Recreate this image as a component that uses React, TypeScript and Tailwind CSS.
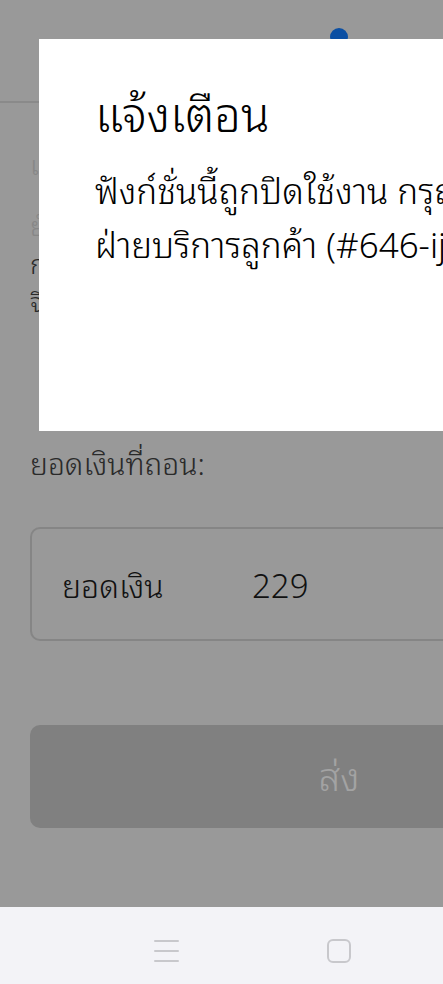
import React from 'react';

const font = {
  fontFamily: '"Noto Sans Thai Looped", "Noto Sans", "Noto Sans Thai", "DejaVu Sans", sans-serif',
};

const NavBar: React.FC = () => (
  <div className="h-[77px] bg-[#f3f3f7] flex items-center justify-around px-[80px] pt-[10px]">
    <div className="flex flex-col gap-[8px] w-[25px]">
      <span className="block h-[2px] bg-[#c8c8cc] rounded" />
      <span className="block h-[2px] bg-[#c8c8cc] rounded" />
      <span className="block h-[2px] bg-[#c8c8cc] rounded" />
    </div>
    <div className="w-[24px] h-[24px] rounded-[6px] border-2 border-[#c8c8cc]" />
    <svg width="24" height="24" viewBox="0 0 24 24" fill="none" stroke="#c8c8cc" strokeWidth="2">
      <path d="M15 5l-7 7 7 7" strokeLinecap="round" strokeLinejoin="round" />
    </svg>
  </div>
);

const App: React.FC = () => {
  return (
    <div className="relative w-[443px] h-[984px] overflow-hidden bg-[#999999]" style={font}>
      <div className="w-[678px] h-full flex flex-col">
        {/* header */}
        <div className="h-[103px] border-b-2 border-[#8a8a8a] flex justify-center pt-[28px] shrink-0">
          <span className="block w-[18px] h-[18px] rounded-full bg-[#0b4fa3]" />
        </div>

        <div className="flex-1 px-[30px]">
          <div className="mt-[40px] text-[27px] leading-[40px] text-[#878787] font-light">เลือกบัญชีธนาคาร</div>
          <div className="mt-[22px] text-[27px] leading-[38px] text-[#878787] font-light">ยังไม่ได้ผูกบัญชี</div>
          <div className="text-[27px] leading-[38px] text-[#2a2a2a] font-light">
            <div>กรุณาผูกบัญชีธนาคาร</div>
            <div>จึงจะถอนเงินได้</div>
          </div>

          <div className="mt-[123px] text-[30px] leading-[40px] text-[#2a2a2a] font-light">ยอดเงินที่ถอน:</div>

          <div className="mt-[45px] h-[114px] rounded-[10px] border-2 border-[#858585] flex items-center pl-[30px]">
            <span className="text-[32px] text-[#111] w-[190px] font-light">ยอดเงิน</span>
            <span className="text-[33px] text-[#111] font-light">229</span>
          </div>

          <button className="mt-[84px] w-full h-[103px] rounded-[10px] bg-[#808080] text-[39px] text-[#a3a3a3] pb-[4px] font-light">
            ส่ง
          </button>
        </div>

        <NavBar />
      </div>

      {/* alert dialog */}
      <div className="absolute left-[39px] top-[39px] w-[600px] h-[392px] bg-white px-[56px] pt-[42px]">
        <h2 className="text-[47px] text-black leading-[60px] font-light">แจ้งเตือน</h2>
        <p className="mt-[20px] text-[35px] text-black leading-[54px] font-light whitespace-nowrap">
          ฟังก์ชั่นนี้ถูกปิดใช้งาน กรุณาติดต่อ
          <br />
          ฝ่ายบริการลูกค้า (#646-ijk)
        </p>
      </div>
    </div>
  );
};

export default App;
